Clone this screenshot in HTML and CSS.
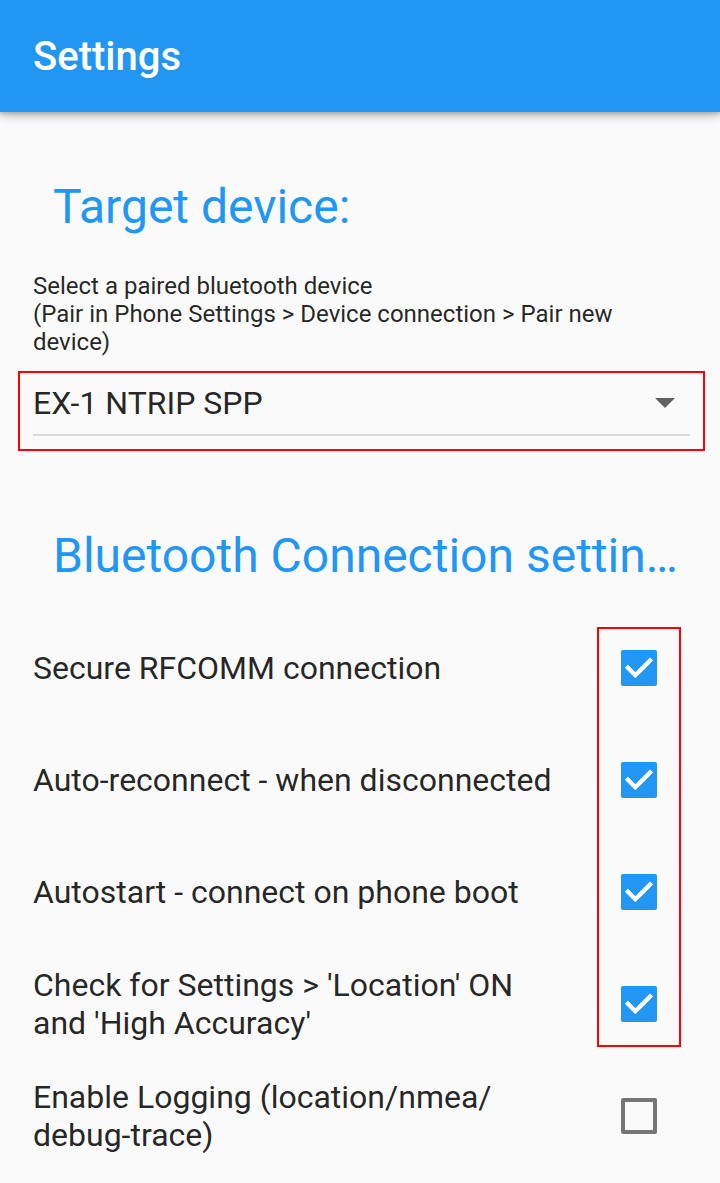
FILE: index.html
```html
<!DOCTYPE html>
<html>
  <head>
    <title>Settings</title>
    <link rel="stylesheet" href="styles.css">
  </head>
  <body>
    <header class="app-bar">
      <h1>Settings</h1>
    </header>

    <main class="content">
      <h2 class="section-title">Target device:</h2>
      <p class="hint">Select a paired bluetooth device<br>(Pair in Phone Settings &gt; Device connection &gt; Pair new device)</p>

      <div class="device-select">
        <div class="select-field">
          <span class="select-value">EX-1 NTRIP SPP</span>
          <span class="select-arrow"></span>
        </div>
      </div>

      <h2 class="section-title">Bluetooth Connection settings</h2>

      <!-- checkbox list, the red frame spans the first four checkboxes -->
      <div class="option-list">
        <div class="option-frame"></div>

        <div class="option-label row-1">Secure RFCOMM connection</div>
        <div class="checkbox checked row-1"><svg viewBox="0 0 36 36"><path d="M5.4 16.2 L14.4 25.2 L30.6 9"/></svg></div>

        <div class="option-label row-2">Auto-reconnect - when disconnected</div>
        <div class="checkbox checked row-2"><svg viewBox="0 0 36 36"><path d="M5.4 16.2 L14.4 25.2 L30.6 9"/></svg></div>

        <div class="option-label row-3">Autostart - connect on phone boot</div>
        <div class="checkbox checked row-3"><svg viewBox="0 0 36 36"><path d="M5.4 16.2 L14.4 25.2 L30.6 9"/></svg></div>

        <div class="option-label row-4">Check for Settings &gt; 'Location' ON and 'High Accuracy'</div>
        <div class="checkbox checked row-4"><svg viewBox="0 0 36 36"><path d="M5.4 16.2 L14.4 25.2 L30.6 9"/></svg></div>

        <div class="option-label row-5">Enable Logging (location/nmea/<wbr><span class="nowrap">debug-trace)</span></div>
        <div class="checkbox row-5"></div>
      </div>
    </main>
  </body>
</html>
```

FILE: styles.css
```css
* {
  box-sizing: border-box;
}
body {
  margin: 0;
  background-color: #fafafa;
  font-family: Roboto, "Noto Sans", sans-serif;
  color: rgba(0, 0, 0, 0.87);
}

/* App bar */
.app-bar {
  height: 112px;
  display: flex;
  align-items: center;
  padding-left: 33px;
  background-color: #2196f3;
  box-shadow: 0 4px 10px rgba(0, 0, 0, 0.22), 0 2px 4px rgba(0, 0, 0, 0.18);
}
.app-bar h1 {
  margin: 0;
  font-size: 40px;
  font-weight: 500;
  color: white;
}

/* Content */
.content {
  padding: 67px 32px 0 33px;
}
.section-title {
  margin: 0;
  padding-left: 20px;
  font-size: 48px;
  font-weight: 400;
  line-height: 56px;
  color: #2196f3;
  white-space: nowrap;
  overflow: hidden;
  text-overflow: ellipsis;
}
.hint {
  margin: 37px 0 0;
  font-size: 24px;
  line-height: 28px;
}

/* Dropdown */
.device-select {
  margin: 15px -17px 77px -15px;
  padding: 10px 13px 13px;
  border: 2px solid #f00;
}
.select-field {
  display: flex;
  align-items: center;
  justify-content: space-between;
  padding-bottom: 11px;
  border-bottom: 2px solid #dadada;
}
.select-value {
  font-size: 32px;
  line-height: 40px;
}
.select-arrow {
  width: 0;
  height: 0;
  margin-right: 15px;
  border-left: 10px solid transparent;
  border-right: 10px solid transparent;
  border-top: 10px solid #616161;
}

/* Checkbox list */
.option-list {
  display: grid;
  grid-template-columns: 525px 84px;
  grid-auto-rows: 112px;
  column-gap: 39px;
  margin: 28px 0 0;
}
.option-frame {
  grid-column: 2;
  grid-row: 1 / 5;
  margin: 15px 0 13px;
  border: 2px solid #f00;
}
.option-label {
  grid-column: 1;
  align-self: center;
  font-size: 32px;
  line-height: 38px;
}
.nowrap {
  white-space: nowrap;
}
.checkbox {
  grid-column: 2;
  align-self: center;
  justify-self: center;
  width: 36px;
  height: 36px;
  border: 4px solid #757575;
  border-radius: 2px;
}
.checkbox.checked {
  border: none;
  background-color: #2196f3;
}
.checkbox svg {
  display: block;
  width: 36px;
  height: 36px;
  fill: none;
  stroke: white;
  stroke-width: 4.4;
}
.row-1 { grid-row: 1; }
.row-2 { grid-row: 2; }
.row-3 { grid-row: 3; }
.row-4 { grid-row: 4; }
.row-5 { grid-row: 5; }
```
